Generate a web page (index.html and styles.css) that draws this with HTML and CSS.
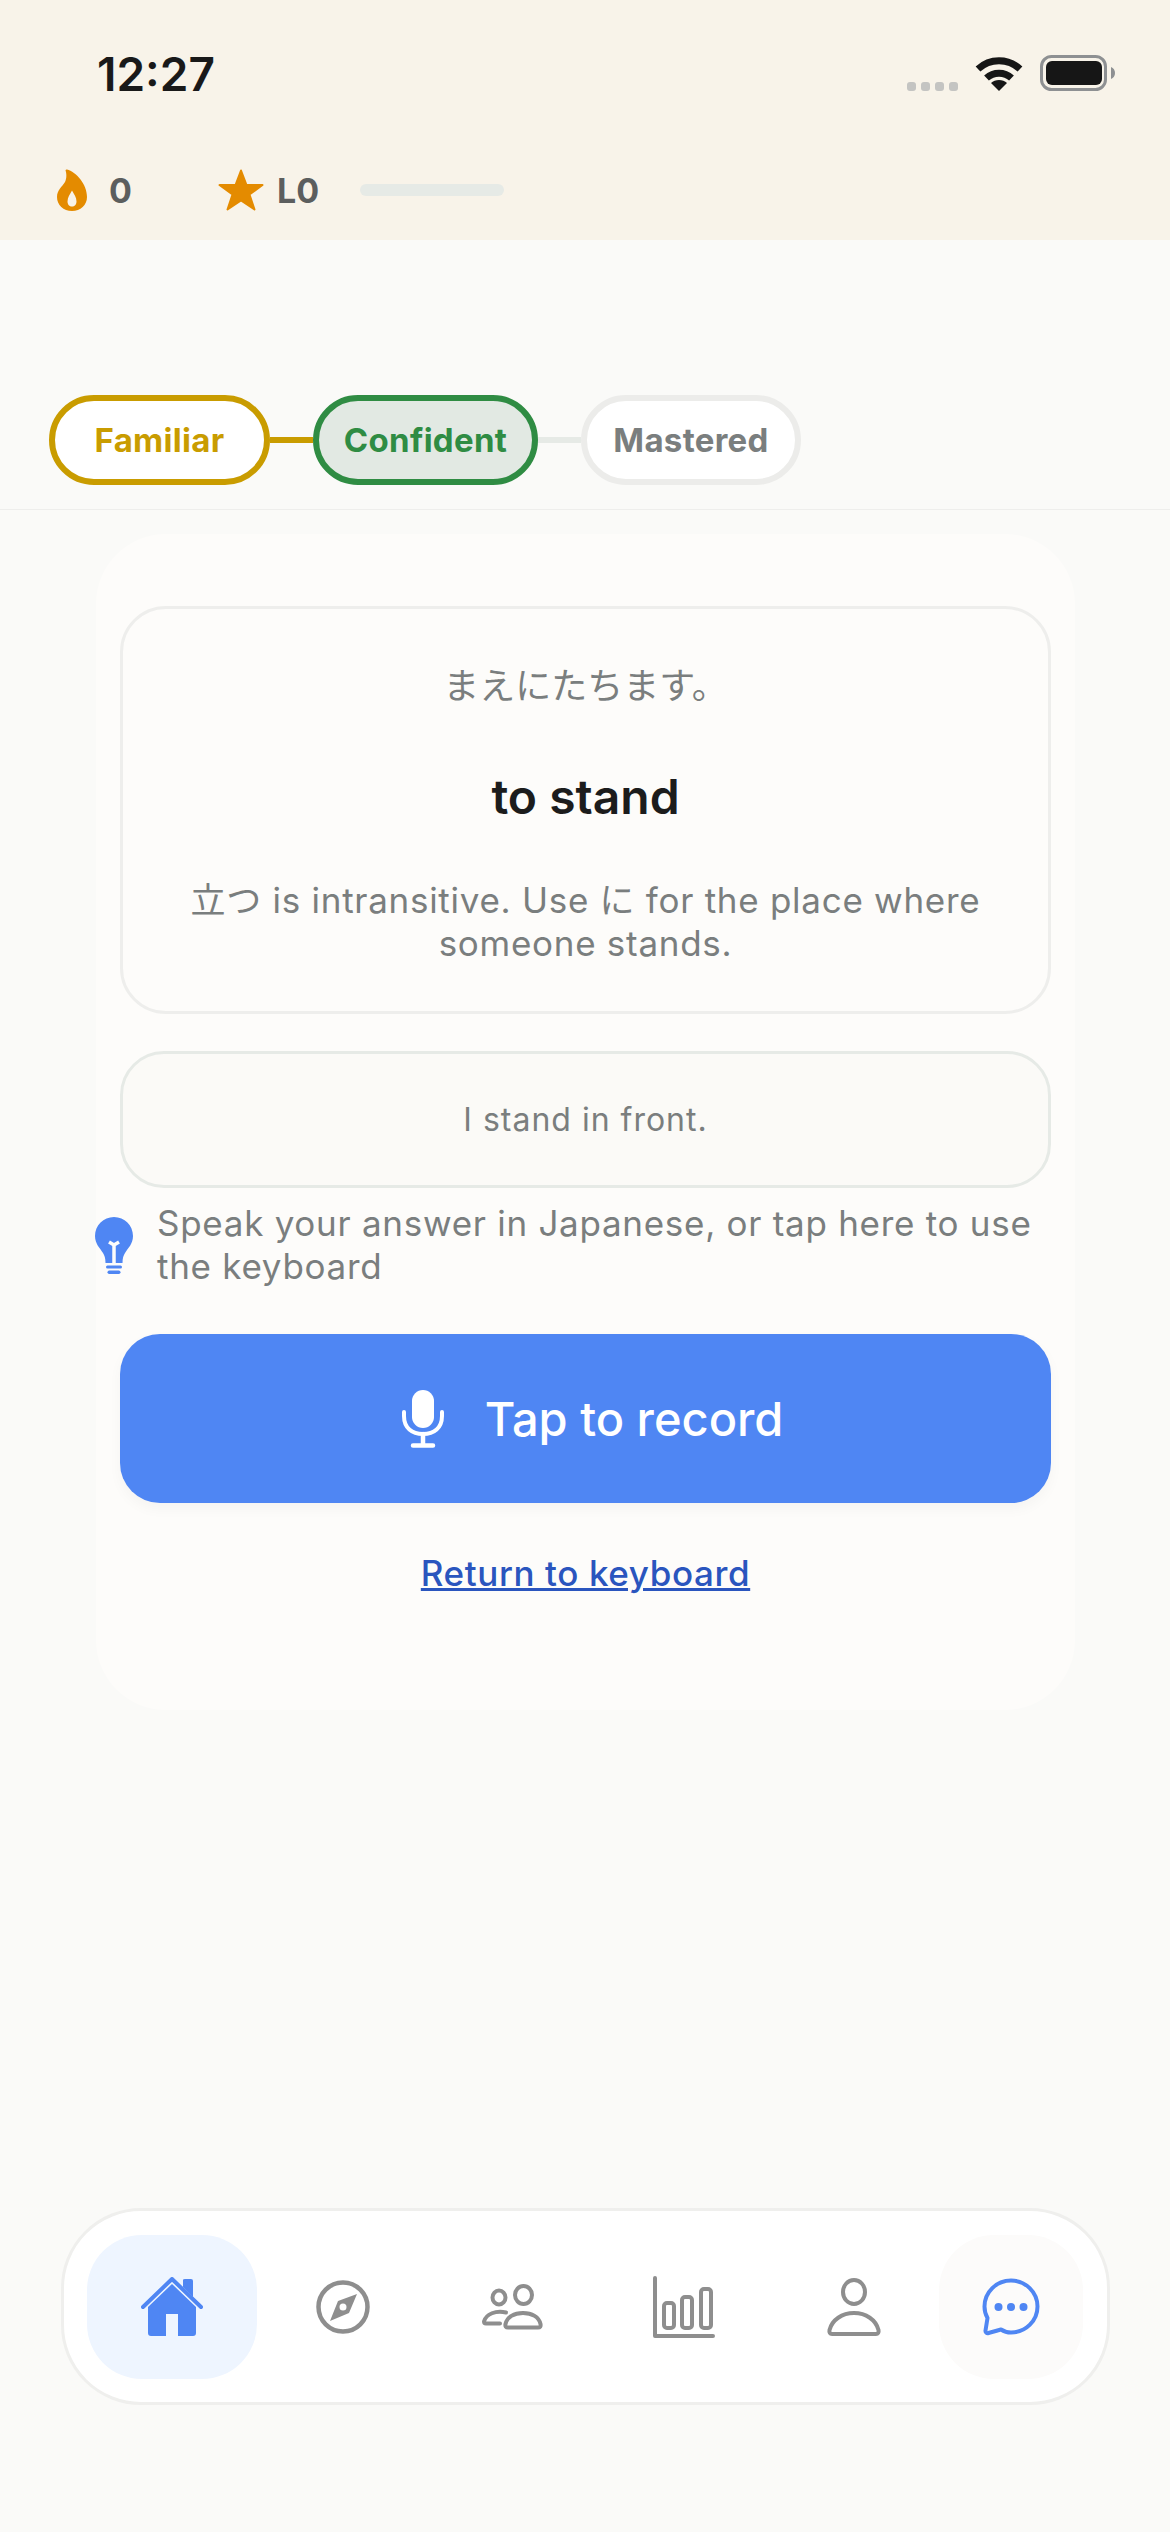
FILE: index.html
```html
<!DOCTYPE html>
<html>
  <head>
    <meta http-equiv="content-type" content="text/html; charset=UTF-8">
    <meta name="viewport" content="width=device-width, initial-scale=1">
    <link rel="stylesheet" href="styles.css">
  </head>
  <body>
    <header class="cabecera">
      <div class="estado">
        <span class="hora">12:27</span>
        <div class="estado-iconos">
          <div class="puntos"><span></span><span></span><span></span><span></span></div>
          <svg class="wifi" width="48" height="36" viewBox="0 0 48 36">
            <path d="M3 14C15 3 33 3 45 14" fill="none" stroke="#161616" stroke-width="7"/>
            <path d="M11.5 23C18.5 16.5 29.5 16.5 36.5 23" fill="none" stroke="#161616" stroke-width="7"/>
            <path d="M24 36L16 28C20 24 28 24 32 28Z" fill="#161616"/>
          </svg>
          <svg class="bateria" width="75" height="36" viewBox="0 0 75 36">
            <rect x="1.5" y="1.5" width="64" height="33" rx="10" fill="none" stroke="#8e9092" stroke-width="3"/>
            <rect x="6" y="6" width="56" height="24" rx="6" fill="#161616"/>
            <path d="M71 12C73.500 13 75 15 75 18C75 21 73.500 23 71 24Z" fill="#8e9092"/>
          </svg>
        </div>
      </div>
      <div class="stats">
        <svg class="llama" width="30" height="42" viewBox="0 0 30 42">
          <path fill-rule="evenodd" fill="#e48b00" d="M10 .5C19 3 30 15 30 28C30 36 23.500 42 15 42C6.500 42 0 36 0 28C0 21 5 18 8 13C10 9 9.500 4 8.500 1.500C8.700 .6 9.300 .3 10 .5ZM15 21.500C13 25 10.500 28.500 10.500 32.500C10.500 35.500 12.500 37.500 15 37.500C17.500 37.500 19.500 35.500 19.500 32.500C19.500 28.500 17 25 15 21.500Z"/>
        </svg>
        <span class="stat-num racha">0</span>
        <svg class="estrella" width="46" height="42" viewBox="0 0 46 42">
          <polygon points="23,1.500 28.500,16 44.500,16 31.500,25.500 36.500,40.500 23,31.500 9.500,40.500 14.500,25.500 1.500,16 17.500,16" fill="#e48b00" stroke="#e48b00" stroke-width="2" stroke-linejoin="round"/>
        </svg>
        <span class="stat-num nivel">L0</span>
        <div class="barra"></div>
      </div>
    </header>

    <div class="pasos">
      <div class="paso familiar">Familiar</div>
      <div class="linea amarilla"></div>
      <div class="paso confiado">Confident</div>
      <div class="linea gris"></div>
      <div class="paso dominado">Mastered</div>
    </div>

    <main class="tarjeta">
      <section class="caja-frase">
        <p class="frase">まえにたちます。</p>
        <h1 class="palabra">to stand</h1>
        <p class="nota">立つ is intransitive. Use に for the place where someone stands.</p>
      </section>
      <section class="caja-traduccion">I stand in front.</section>
      <div class="pista">
        <svg class="bombilla" width="38" height="57" viewBox="0 0 38 57">
          <path fill="#4f86f3" d="M19 0C8.500 0 0 8.500 0 19C0 27 5 31 8 36C9.500 38.500 10.500 41 10.500 46H27.500C27.500 41 28.500 38.500 30 36C33 31 38 27 38 19C38 8.500 29.500 0 19 0Z"/>
          <path fill="none" stroke="#fdfcfa" stroke-width="3.500" d="M19 46V28M14 25L19 28L24 25"/>
          <rect x="11" y="48.500" width="16" height="3" rx="1.500" fill="#4f86f3"/>
          <rect x="12.500" y="53.500" width="13" height="3.500" rx="1.700" fill="#4f86f3"/>
        </svg>
        <p>Speak your answer in Japanese, or tap here to use the keyboard</p>
      </div>
      <button class="grabar">
        <svg width="42" height="58" viewBox="0 0 42 58">
          <rect x="10" y="0" width="22" height="38" rx="11" fill="#fff"/>
          <path d="M2 22V26C2 38 10 44 21 44C32 44 40 38 40 26V22" fill="none" stroke="#fff" stroke-width="4" stroke-linecap="round"/>
          <path d="M21 44V55M11 55.500H31" fill="none" stroke="#fff" stroke-width="4.500" stroke-linecap="round"/>
        </svg>
        <span>Tap to record</span>
      </button>
      <a class="volver" href="#">Return to keyboard</a>
    </main>

    <nav class="menu">
      <div class="menu-item activo">
        <svg width="62" height="59" viewBox="0 0 62 59">
          <path fill="#4f86f3" d="M31 7L55 30V56Q55 59 52 59H37V37H25V59H10Q7 59 7 56V30Z"/>
          <path fill="none" stroke="#4f86f3" stroke-width="4" stroke-linecap="round" stroke-linejoin="round" d="M2 30L31 2L60 30"/>
          <path fill="#4f86f3" d="M42 3Q42 2 44 2H50Q52 2 52 4V20L42 10Z"/>
        </svg>
      </div>
      <div class="menu-item">
        <svg width="54" height="54" viewBox="0 0 54 54">
          <circle cx="27" cy="27" r="24.500" fill="none" stroke="#8e8e8e" stroke-width="4.500"/>
          <path fill="#8e8e8e" fill-rule="evenodd" d="M41 14L33 33L14 41L22 21ZM27 23.500A3.500 3.500 0 1 0 27 30.500A3.500 3.500 0 1 0 27 23.500Z"/>
        </svg>
      </div>
      <div class="menu-item">
        <svg width="62" height="46" viewBox="0 0 62 46">
          <g fill="none" stroke="#8e8e8e" stroke-width="4" stroke-linecap="round" stroke-linejoin="round">
            <ellipse cx="41.500" cy="11" rx="8.500" ry="9"/>
            <ellipse cx="17" cy="13.500" rx="6.500" ry="7"/>
            <path d="M23.500 40C25 33 32 29 41 29C50 29 57 33 58.500 40C59 42.500 58 43.500 56 43.500H26C24 43.500 23 42.500 23.500 40Z"/>
            <path d="M24 28.500C14 26 4 30 2 37.500Q2 39.500 4 39.500H18"/>
          </g>
        </svg>
      </div>
      <div class="menu-item">
        <svg width="62" height="62" viewBox="0 0 62 62">
          <g fill="none" stroke="#8e8e8e" stroke-width="4" stroke-linecap="round" stroke-linejoin="round">
            <path d="M2 2V60H60"/>
            <rect x="11" y="27" width="10" height="25" rx="3"/>
            <rect x="29" y="21" width="10" height="31" rx="3"/>
            <rect x="48" y="13" width="10" height="39" rx="3"/>
          </g>
        </svg>
      </div>
      <div class="menu-item">
        <svg width="54" height="58" viewBox="0 0 54 58">
          <g fill="none" stroke="#8e8e8e" stroke-width="4" stroke-linejoin="round">
            <ellipse cx="27" cy="14" rx="11" ry="12"/>
            <path d="M2.500 52C5 42 15 35 27 35C39 35 49 42 51.500 52C52 54.500 51 56 49 56H5C3 56 2 54.500 2.500 52Z"/>
          </g>
        </svg>
      </div>
      <div class="menu-item chat">
        <svg width="58" height="58" viewBox="0 0 58 58">
          <path fill="none" stroke="#4f86f3" stroke-width="4" stroke-linejoin="round" d="M29 2.500C14.500 2.500 2.500 14 2.500 28.500C2.500 32.500 3.500 36.500 5.500 40L3.500 52.500C3.200 54.500 4.800 55.500 6.500 55L19 51.500C22 53.500 25.500 54.500 29 54.500C43.500 54.500 55.500 43 55.500 28.500C55.500 14 43.500 2.500 29 2.500Z"/>
          <circle cx="16.500" cy="29" r="4" fill="#4f86f3"/>
          <circle cx="29" cy="29" r="4" fill="#4f86f3"/>
          <circle cx="41.500" cy="29" r="4" fill="#4f86f3"/>
        </svg>
      </div>
    </nav>
  </body>
</html>
```

FILE: styles.css
```css
* { box-sizing: border-box; }
html { background-color: #fafaf8; }
body {
  margin: 0;
  height: 2532px;
  display: flex;
  flex-direction: column;
  font-family: Inter, "Noto Sans CJK JP", sans-serif;
  color: #7a7e7e;
}

/* cabecera */
.cabecera {
  height: 240px;
  background-color: #f8f3e9;
}
.estado {
  height: 119px;
  padding: 50px 55px 0 97px;
  display: flex;
  justify-content: space-between;
}
.hora {
  font-size: 46px;
  line-height: 48px;
  font-weight: 600;
  color: #191919;
}
.estado-iconos {
  display: flex;
  align-items: flex-start;
  padding-top: 5px;
}
.puntos {
  display: flex;
  gap: 5px;
  margin: 27px 17px 0 0;
}
.puntos span {
  width: 9px;
  height: 9px;
  border-radius: 3px;
  background-color: #c4c4c2;
}
.bateria { margin-left: 17px; }
.stats {
  display: flex;
  align-items: center;
  height: 42px;
  margin-top: 50px;
  padding-left: 57px;
}
.stat-num {
  font-size: 34px;
  font-weight: 700;
  color: #5c5e5e;
}
.racha { margin-left: 22px; }
.estrella { margin-left: 86px; }
.nivel { margin-left: 13px; }
.barra {
  width: 144px;
  height: 12px;
  margin-left: 41px;
  border-radius: 6px;
  background-color: #e6eae6;
}

/* pasos */
.pasos {
  display: flex;
  align-items: center;
  height: 270px;
  padding: 155px 0 24px 49px;
  border-bottom: 1px solid #eeeeec;
}
.paso {
  height: 90px;
  display: flex;
  align-items: center;
  justify-content: center;
  border: 6px solid #ececea;
  border-radius: 45px;
  background-color: #fff;
  font-size: 33px;
  font-weight: 700;
  letter-spacing: 0.3px;
}
.paso.familiar {
  width: 221px;
  border-color: #c99c00;
  color: #c99c00;
}
.paso.confiado {
  width: 225px;
  border-color: #2f8c43;
  background-color: #e2e9e3;
  color: #2f8c43;
}
.paso.dominado {
  width: 220px;
  color: #7a7e7e;
}
.linea {
  height: 6px;
  width: 43px;
}
.linea.amarilla { background-color: #c99c00; }
.linea.gris { background-color: #e6eae6; }

/* tarjeta */
.tarjeta {
  width: 979px;
  height: 1176px;
  margin: 24px 0 0 96px;
  padding: 72px 24px 0 24px;
  border-radius: 70px;
  background-color: #fdfcfa;
  display: flex;
  flex-direction: column;
  align-items: stretch;
}
.caja-frase {
  height: 408px;
  padding: 55px 40px 0 40px;
  border: 3px solid #eeeeec;
  border-radius: 46px;
  text-align: center;
}
.frase {
  margin: 0;
  font-size: 36px;
  line-height: 44px;
}
.palabra {
  margin: 61px 0 0 0;
  font-size: 48px;
  line-height: 56px;
  font-weight: 600;
  color: #1c1c1c;
}
.nota {
  margin: 54px 0 0 0;
  font-size: 35px;
  line-height: 43px;
  letter-spacing: 0.72px;
}
.caja-traduccion {
  height: 137px;
  margin-top: 37px;
  display: flex;
  align-items: center;
  justify-content: center;
  border: 3px solid #e6eae6;
  border-radius: 44px;
  background-color: #fbfaf7;
  font-size: 32px;
  letter-spacing: 1px;
}
.pista {
  display: flex;
  align-items: center;
  margin: 14px 0 0 -25px;
}
.bombilla {
  flex: none;
  margin: 0 24px 0 0;
}
.pista p {
  margin: 0;
  font-size: 35px;
  line-height: 43px;
  letter-spacing: 0.72px;
}
.grabar {
  height: 169px;
  margin-top: 46px;
  padding: 0 0 0 14px;
  display: flex;
  align-items: center;
  justify-content: center;
  gap: 41px;
  border: none;
  border-radius: 40px;
  background-color: #4f86f3;
  box-shadow: 0 6px 14px rgba(0, 0, 0, 0.035);
  color: #fff;
  font-family: inherit;
  font-size: 47px;
  font-weight: 500;
}
.volver {
  margin-top: 48px;
  text-align: center;
  font-size: 35px;
  line-height: 44px;
  font-weight: 500;
  letter-spacing: 0.6px;
  color: #2a55be;
}

/* menu de abajo */
.menu {
  height: 197px;
  margin: auto 60px 127px 61px;
  padding: 0 24px 0 23px;
  display: flex;
  align-items: center;
  border: 3px solid #efefed;
  border-radius: 80px;
  background-color: #fff;
}
.menu-item {
  width: 171px;
  height: 144px;
  display: flex;
  align-items: center;
  justify-content: center;
  border-radius: 55px;
}
.menu-item.activo { background-color: #eef5ff; }
.menu-item.chat {
  width: 144px;
  background-color: #fcfbfa;
}
```
